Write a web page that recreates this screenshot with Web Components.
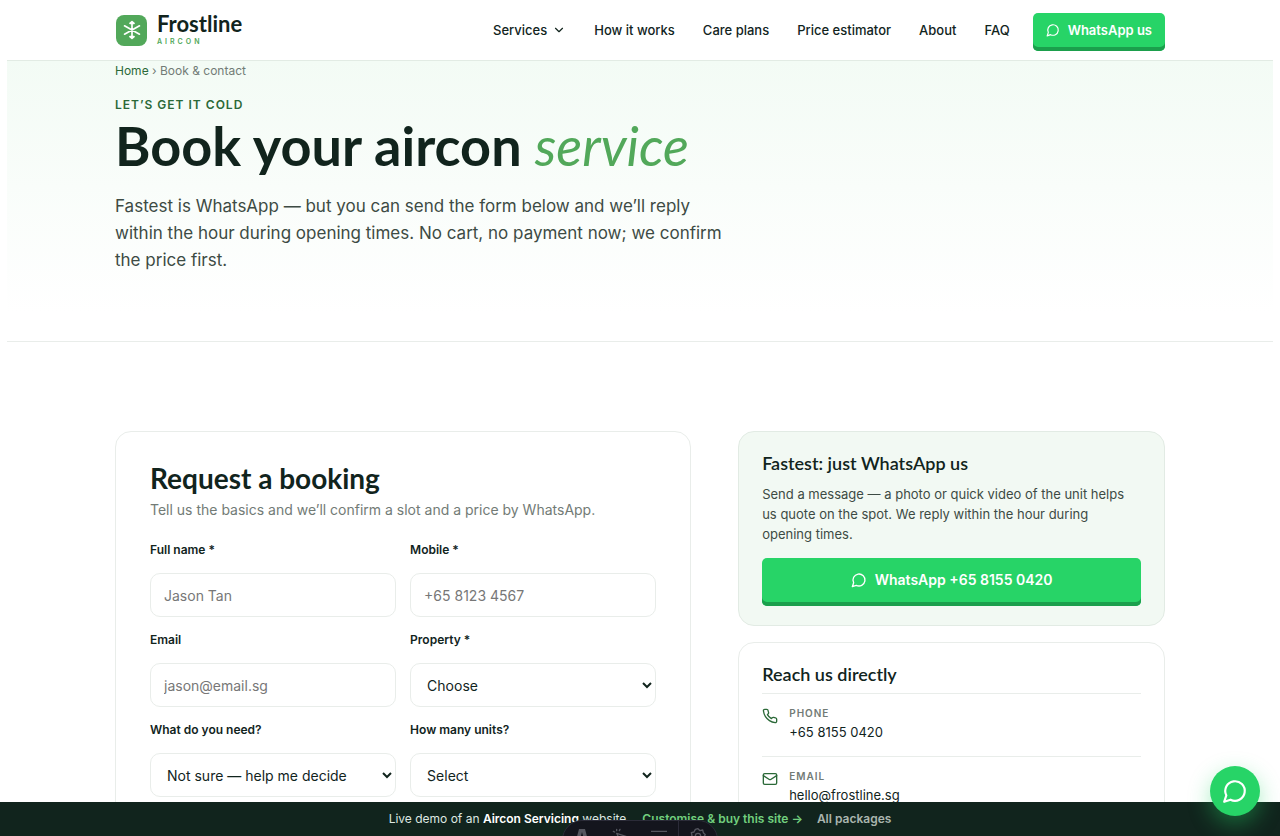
<!DOCTYPE html>
<html lang="en">
<head>
<meta charset="utf-8">
<meta name="viewport" content="width=device-width, initial-scale=1">
<title>Book &amp; contact | Frostline Aircon</title>
<style>
  :root {
    --ink: #11241d;
    --body: #3d4b44;
    --muted: #727b76;
    --green: #52a85a;
    --green-dark: #2b6938;
    --whatsapp: #27d467;
    --whatsapp-dark: #1b9f4c;
    --line: #e9edea;
    --head: Lato, "Open Sans", sans-serif;
  }

  body {
    margin: 0;
    height: 100vh;
    display: flex;
    flex-direction: column;
    background: #fff;
    color: var(--ink);
    font-family: Inter, "Open Sans", sans-serif;
    font-size: 14px;
  }

  main {
    flex: 1;
    min-height: 0;
    margin: 0 7px;
    overflow-y: auto;
    scrollbar-width: none;
  }
</style>
</head>
<body>
  <site-header></site-header>
  <main>
    <page-hero>
      <a slot="crumb" href="#home">Home</a>
      <span slot="here">Book &amp; contact</span>
      <span slot="eyebrow">Let’s get it cold</span>
      <span slot="title">Book your aircon</span>
      <em slot="accent">service</em>
      <span slot="lead">Fastest is WhatsApp — but you can send the form below and we’ll reply within the hour during opening times. No cart, no payment now; we confirm the price first.</span>
    </page-hero>
    <booking-layout>
      <booking-form slot="form"></booking-form>
      <info-card tinted slot="side">
        <span slot="title">Fastest: just WhatsApp us</span>
        <span slot="text">Send a message — a photo or quick video of the unit helps us quote on the spot. We reply within the hour during opening times.</span>
        <whatsapp-button wide>WhatsApp +65 8155 0420</whatsapp-button>
      </info-card>
      <info-card slot="side">
        <span slot="title">Reach us directly</span>
        <contact-row icon="phone" label="Phone" href="tel:+6581550420">+65 8155 0420</contact-row>
        <contact-row icon="mail" label="Email" href="mailto:hello@frostline.sg">hello@frostline.sg</contact-row>
      </info-card>
    </booking-layout>
  </main>
  <demo-bar></demo-bar>
  <whatsapp-fab></whatsapp-fab>
  <dev-toolbar></dev-toolbar>

<script>
// Line icons, all on a 24px grid
const ICONS = {
  chat: `<path d="M7.9 20A9 9 0 1 0 4 16.1L2 22Z"/>`,
  chevron: `<path d="m6 9 6 6 6-6"/>`,
  phone: `<path d="M22 16.92v3a2 2 0 0 1-2.18 2 19.79 19.79 0 0 1-8.63-3.07 19.5 19.5 0 0 1-6-6 19.79 19.79 0 0 1-3.07-8.67A2 2 0 0 1 4.11 2h3a2 2 0 0 1 2 1.72 12.84 12.84 0 0 0 .7 2.81 2 2 0 0 1-.45 2.11L8.09 9.91a16 16 0 0 0 6 6l1.27-1.27a2 2 0 0 1 2.11-.45 12.84 12.84 0 0 0 2.81.7A2 2 0 0 1 22 16.92z"/>`,
  mail: `<rect x="2" y="4" width="20" height="16" rx="2"/><path d="m22 7-8.97 5.7a1.94 1.94 0 0 1-2.06 0L2 7"/>`,
  flake: `<path d="M12 2v20M3 7l18 10M21 7 3 17M9.500 4 12 2l2.500 2zM9.500 20l2.500 2 2.500-2z"/>`,
  cursor: `<path d="m7 8 15 5-6 2-3 6zM7 2v2M2 5l2 1M12 2l-1 2"/>`,
  bars: `<path d="M0 5h24M5 13h19"/>`,
  gear: `<circle cx="12" cy="12" r="4"/><path d="M12 1l3 3 4-1 1 4 3 3-2 3 1 4-4 1-3 4-4-2-4 1-2-4-4-2 2-4-1-4 4-1 2-4z"/>`
};

class LineIcon extends HTMLElement {
  constructor() {
    super();
    const shadow = this.attachShadow({ mode: "open" });
    shadow.innerHTML = `
      <style>
        :host { display: inline-flex; width: 14px; height: 14px; flex: none; }
        svg { width: 100%; height: 100%; }
      </style>
      <svg viewBox="0 0 24 24" fill="none" stroke="currentColor" stroke-width="2"
        stroke-linecap="round" stroke-linejoin="round" aria-hidden="true">${ICONS[this.getAttribute("name")]}</svg>`;
  }
}
customElements.define("line-icon", LineIcon);

class WhatsappButton extends HTMLElement {
  constructor() {
    super();
    const shadow = this.attachShadow({ mode: "open" });
    shadow.innerHTML = `
      <style>
        :host { display: block; }
        button {
          display: flex;
          align-items: center;
          justify-content: center;
          gap: 8px;
          width: 100%;
          height: 38px;
          padding: 0 13px 4px;
          border: 0;
          border-radius: 5px;
          background: var(--whatsapp);
          box-shadow: inset 0 -4px 0 var(--whatsapp-dark);
          color: #fff;
          font: 600 13px/20px Inter, sans-serif;
          white-space: nowrap;
          cursor: pointer;
        }
        :host([wide]) button { height: 48px; font-size: 14px; }
        :host([wide]) line-icon { width: 16px; height: 16px; }
      </style>
      <button type="button"><line-icon name="chat"></line-icon><slot></slot></button>`;
  }
}
customElements.define("whatsapp-button", WhatsappButton);

class SiteHeader extends HTMLElement {
  constructor() {
    super();
    const shadow = this.attachShadow({ mode: "open" });
    shadow.innerHTML = `
      <style>
        :host { display: block; margin: 0 7px; border-bottom: 1px solid #e2ebe4; }
        header {
          display: flex;
          align-items: center;
          justify-content: space-between;
          max-width: 1050px;
          height: 60px;
          margin: 0 auto;
        }
        a { color: inherit; text-decoration: none; }
        .logo { display: flex; align-items: center; gap: 10px; }
        .mark {
          display: grid;
          place-items: center;
          width: 31px;
          height: 31px;
          margin-left: 1px;
          border-radius: 8px;
          background: var(--green);
          color: #fff;
        }
        .mark line-icon { width: 20px; height: 20px; }
        .words { display: grid; padding-bottom: 4px; }
        .name { font: 700 22px/26px var(--head); }
        .sub { color: var(--green); font-size: 7px; font-weight: 600; line-height: 9px; letter-spacing: 3px; }
        nav { display: flex; align-items: center; gap: 28px; font-size: 13px; font-weight: 500; }
        nav a { display: flex; align-items: center; gap: 5px; white-space: nowrap; }
        .right { display: flex; align-items: center; gap: 23px; }
        whatsapp-button { margin-top: 4px; }
      </style>
      <header>
        <a class="logo" href="#home">
          <span class="mark"><line-icon name="flake"></line-icon></span>
          <span class="words"><span class="name">Frostline</span><span class="sub">AIRCON</span></span>
        </a>
        <div class="right">
          <nav>
            <a href="#services">Services <line-icon name="chevron"></line-icon></a>
            <a href="#how">How it works</a>
            <a href="#plans">Care plans</a>
            <a href="#prices">Price estimator</a>
            <a href="#about">About</a>
            <a href="#faq">FAQ</a>
          </nav>
          <whatsapp-button>WhatsApp us</whatsapp-button>
        </div>
      </header>`;
  }
}
customElements.define("site-header", SiteHeader);

class PageHero extends HTMLElement {
  constructor() {
    super();
    const shadow = this.attachShadow({ mode: "open" });
    shadow.innerHTML = `
      <style>
        :host {
          display: block;
          border-bottom: 1px solid var(--line);
          background: linear-gradient(#f3fbf5, #fff 90%);
        }
        section { max-width: 1050px; margin: 0 auto; padding-bottom: 67px; }
        .crumbs { color: var(--muted); font-size: 12px; line-height: 20px; }
        ::slotted(a) { color: var(--green-dark); text-decoration: none; }
        .eyebrow {
          margin: 14px 0 0;
          color: var(--green-dark);
          font-size: 12px;
          font-weight: 600;
          line-height: 20px;
          letter-spacing: 1px;
          text-transform: uppercase;
        }
        h1 { margin: 0; font: 700 54px/62px var(--head); }
        ::slotted(em) { color: var(--green); font-weight: 400; }
        .lead { max-width: 620px; margin: 16px 0 0; color: var(--body); font-size: 17px; line-height: 27px; }
      </style>
      <section>
        <div class="crumbs"><slot name="crumb"></slot> › <slot name="here"></slot></div>
        <p class="eyebrow"><slot name="eyebrow"></slot></p>
        <h1><slot name="title"></slot> <slot name="accent"></slot></h1>
        <p class="lead"><slot name="lead"></slot></p>
      </section>`;
  }
}
customElements.define("page-hero", PageHero);

class BookingLayout extends HTMLElement {
  constructor() {
    super();
    const shadow = this.attachShadow({ mode: "open" });
    shadow.innerHTML = `
      <style>
        :host {
          display: grid;
          grid-template-columns: 1.35fr 1fr;
          align-items: start;
          gap: 47px;
          max-width: 1050px;
          margin: 0 auto;
          padding: 89px 0;
        }
        .side { display: grid; gap: 16px; }
      </style>
      <slot name="form"></slot>
      <div class="side"><slot name="side"></slot></div>`;
  }
}
customElements.define("booking-layout", BookingLayout);

class FormField extends HTMLElement {
  constructor() {
    super();
    const shadow = this.attachShadow({ mode: "open" });
    const option = this.getAttribute("option");
    const control = option
      ? `<select id="control"><option>${option}</option></select>`
      : `<input id="control" type="${this.getAttribute("type") || "text"}" placeholder="${this.getAttribute("placeholder")}">`;
    shadow.innerHTML = `
      <style>
        :host { display: grid; gap: 13px; }
        label { font-size: 12px; font-weight: 600; line-height: 20px; }
        input, select {
          box-sizing: border-box;
          width: 100%;
          height: 44px;
          padding: 0 13px;
          border: 1px solid var(--line);
          border-radius: 10px;
          background: #fff;
          color: var(--ink);
          font: 14px/20px Inter, sans-serif;
        }
        select { padding: 0 0 0 12px; }
        input::placeholder { color: #777; }
      </style>
      <label for="control">${this.getAttribute("label")}</label>
      ${control}`;
  }
}
customElements.define("form-field", FormField);

class BookingForm extends HTMLElement {
  constructor() {
    super();
    const shadow = this.attachShadow({ mode: "open" });
    shadow.innerHTML = `
      <style>
        :host { display: block; padding: 32px 34px; border: 1px solid var(--line); border-radius: 16px; }
        h2 { margin: 0; font: 700 28px/28px var(--head); }
        p { margin: 8px 0 20px; color: var(--muted); font-size: 14px; line-height: 20px; }
        form { display: grid; grid-template-columns: 1fr 1fr; gap: 13px 14px; }
      </style>
      <h2>Request a booking</h2>
      <p>Tell us the basics and we’ll confirm a slot and a price by WhatsApp.</p>
      <form>
        <form-field label="Full name *" placeholder="Jason Tan"></form-field>
        <form-field label="Mobile *" type="tel" placeholder="+65 8123 4567"></form-field>
        <form-field label="Email" type="email" placeholder="jason@email.sg"></form-field>
        <form-field label="Property *" option="Choose"></form-field>
        <form-field label="What do you need?" option="Not sure — help me decide"></form-field>
        <form-field label="How many units?" option="Select"></form-field>
      </form>`;
  }
}
customElements.define("booking-form", BookingForm);

class InfoCard extends HTMLElement {
  constructor() {
    super();
    const shadow = this.attachShadow({ mode: "open" });
    shadow.innerHTML = `
      <style>
        :host { display: block; padding: 18px 23px 19px; border: 1px solid var(--line); border-radius: 16px; }
        :host([tinted]) { background: #f2f9f3; border-color: #e2ebe4; }
        h3 { margin: 0; font: 600 18px/26px var(--head); }
        p { margin: 8px 0 14px; color: var(--body); font-size: 13px; line-height: 20px; }
        :host(:not([tinted])) p { display: none; }
        :host(:not([tinted])) h3 { margin-bottom: 6px; }
      </style>
      <h3><slot name="title"></slot></h3>
      <p><slot name="text"></slot></p>
      <slot></slot>`;
  }
}
customElements.define("info-card", InfoCard);

class ContactRow extends HTMLElement {
  constructor() {
    super();
    const shadow = this.attachShadow({ mode: "open" });
    shadow.innerHTML = `
      <style>
        :host { display: flex; gap: 11px; padding: 10px 0 14px; border-top: 1px solid var(--line); }
        line-icon { width: 16px; height: 16px; margin-top: 4px; color: var(--green-dark); }
        div { display: grid; }
        small { color: var(--muted); font-size: 10px; font-weight: 600; line-height: 18px; letter-spacing: 1px; text-transform: uppercase; }
        a { color: var(--ink); font-size: 13px; line-height: 20px; text-decoration: none; }
      </style>
      <line-icon name="${this.getAttribute("icon")}"></line-icon>
      <div>
        <small>${this.getAttribute("label")}</small>
        <a href="${this.getAttribute("href")}"><slot></slot></a>
      </div>`;
  }
}
customElements.define("contact-row", ContactRow);

class DemoBar extends HTMLElement {
  constructor() {
    super();
    const shadow = this.attachShadow({ mode: "open" });
    shadow.innerHTML = `
      <style>
        :host {
          display: flex;
          align-items: center;
          justify-content: center;
          gap: 16px;
          height: 34px;
          background: #11241d;
          color: #dfe8e2;
          font-size: 12px;
          line-height: 20px;
          white-space: nowrap;
        }
        b { color: #fff; font-weight: 600; }
        a { color: #aab5ae; font-weight: 600; text-decoration: none; }
        .buy { color: #72cf7e; }
        .links { display: flex; gap: 14px; }
      </style>
      <span>Live demo of an <b>Aircon Servicing</b> website</span>
      <span class="links">
        <a class="buy" href="#buy">Customise &amp; buy this site →</a>
        <a href="#packages">All packages</a>
      </span>`;
  }
}
customElements.define("demo-bar", DemoBar);

class WhatsappFab extends HTMLElement {
  constructor() {
    super();
    const shadow = this.attachShadow({ mode: "open" });
    shadow.innerHTML = `
      <style>
        :host { position: fixed; right: 20px; bottom: 20px; }
        button {
          display: grid;
          place-items: center;
          width: 50px;
          height: 50px;
          padding: 0;
          border: 0;
          border-radius: 50%;
          background: var(--whatsapp);
          box-shadow: 0 8px 22px rgba(37, 211, 102, .4);
          color: #fff;
          cursor: pointer;
        }
        line-icon { width: 26px; height: 26px; }
      </style>
      <button type="button" aria-label="WhatsApp us"><line-icon name="chat"></line-icon></button>`;
  }
}
customElements.define("whatsapp-fab", WhatsappFab);

// Pill that peeks over the bottom edge of the window
class DevToolbar extends HTMLElement {
  constructor() {
    super();
    const shadow = this.attachShadow({ mode: "open" });
    shadow.innerHTML = `
      <style>
        :host {
          position: fixed;
          left: 50%;
          bottom: -24px;
          box-sizing: border-box;
          display: flex;
          width: 156px;
          height: 40px;
          transform: translateX(-50%);
          overflow: hidden;
          border: 1px solid #2b2b38;
          border-radius: 20px;
          background: #14151d;
          color: #55565f;
        }
        button {
          display: flex;
          flex: 1;
          justify-content: center;
          padding: 7px 0 0;
          border: 0;
          background: none;
          color: inherit;
        }
        button:last-child { border-left: 1px solid #2b2b38; }
        line-icon { width: 16px; height: 16px; }
        svg { width: 16px; height: 18px; }
      </style>
      <button type="button" aria-label="Menu">
        <svg viewBox="0 0 16 18" fill="currentColor" aria-hidden="true"><path d="M5 1h6l4 15-4-2H5l-4 2zM8 4 6 11h4z" fill-rule="evenodd"/></svg>
      </button>
      <button type="button" aria-label="Inspect"><line-icon name="cursor"></line-icon></button>
      <button type="button" aria-label="Audit"><line-icon name="bars"></line-icon></button>
      <button type="button" aria-label="Settings"><line-icon name="gear"></line-icon></button>`;
  }
}
customElements.define("dev-toolbar", DevToolbar);
</script>
</body>
</html>
